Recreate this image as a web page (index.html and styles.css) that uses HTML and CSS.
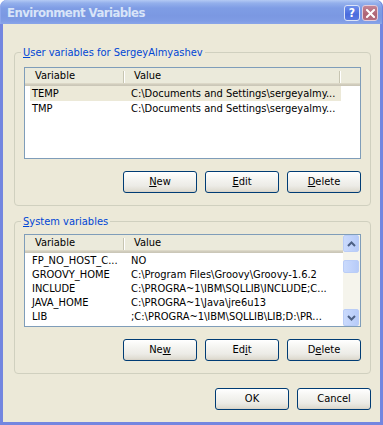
FILE: index.html
```
<!DOCTYPE html>
<html>
<head>
<meta charset="utf-8">
<link rel="stylesheet" href="styles.css">
</head>
<body>
<div class="window">
  <div class="titlebar">
    <span class="title">Environment Variables</span>
    <div class="tbtns">
      <span class="tb help">?</span>
      <span class="tb close"><svg width="9" height="9" viewBox="0 0 9 9"><path d="M1 1 L8 8 M8 1 L1 8" stroke="#fff" stroke-width="2" stroke-linecap="square"/></svg></span>
    </div>
  </div>
  <div class="client">
    <fieldset class="group g1">
      <legend><u>U</u>ser variables for SergeyAlmyashev</legend>
      <div class="list l1">
        <div class="lmain">
          <div class="header">
            <div class="hcell c1">Variable</div>
            <div class="hcell c2 sep">Value</div>
            <div class="hfill"></div>
          </div>
          <div class="rows">
            <div class="row sel"><span class="v1">TEMP</span><span class="v2">C:\Documents and Settings\sergeyalmy...</span></div>
            <div class="row"><span class="v1">TMP</span><span class="v2">C:\Documents and Settings\sergeyalmy...</span></div>
          </div>
        </div>
      </div>
      <div class="btnrow">
        <button class="btn"><u>N</u>ew</button>
        <button class="btn"><u>E</u>dit</button>
        <button class="btn"><u>D</u>elete</button>
      </div>
    </fieldset>
    <fieldset class="group g2">
      <legend><u>S</u>ystem variables</legend>
      <div class="list l2">
        <div class="lmain">
          <div class="header">
            <div class="hcell c1">Variable</div>
            <div class="hcell c2">Value</div>
            <div class="hfill"></div>
          </div>
          <div class="rows">
            <div class="row"><span class="v1">FP_NO_HOST_C...</span><span class="v2">NO</span></div>
            <div class="row"><span class="v1">GROOVY_HOME</span><span class="v2">C:\Program Files\Groovy\Groovy-1.6.2</span></div>
            <div class="row"><span class="v1">INCLUDE</span><span class="v2">C:\PROGRA~1\IBM\SQLLIB\INCLUDE;C...</span></div>
            <div class="row"><span class="v1">JAVA_HOME</span><span class="v2">C:\PROGRA~1\Java\jre6u13</span></div>
            <div class="row"><span class="v1">LIB</span><span class="v2">;C:\PROGRA~1\IBM\SQLLIB\LIB;D:\PR...</span></div>
          </div>
        </div>
        <div class="vscroll">
          <div class="sbtn"><svg width="9" height="6" viewBox="0 0 9 6"><path d="M1 5 L4.5 1.5 L8 5" fill="none" stroke="#4D6185" stroke-width="2"/></svg></div>
          <div class="track"><div class="thumb"></div></div>
          <div class="sbtn"><svg width="9" height="6" viewBox="0 0 9 6"><path d="M1 1 L4.5 4.5 L8 1" fill="none" stroke="#4D6185" stroke-width="2"/></svg></div>
        </div>
      </div>
      <div class="btnrow">
        <button class="btn">Ne<u>w</u></button>
        <button class="btn">Ed<u>i</u>t</button>
        <button class="btn">D<u>e</u>lete</button>
      </div>
    </fieldset>
    <div class="dlgbtns">
      <button class="btn">OK</button>
      <button class="btn">Cancel</button>
    </div>
  </div>
</div>
</body>
</html>
```
FILE: styles.css
```
* { box-sizing: border-box; }
html, body { margin: 0; padding: 0; background: #fff; }
body {
  font-family: "DejaVu Sans Condensed", "DejaVu Sans", sans-serif;
  font-stretch: condensed;
  font-size: 11px;
  color: #000;
}
.window { width: 383px; height: 425px; display: flex; flex-direction: column; }
.titlebar {
  height: 24px;
  border-radius: 7px 7px 0 0;
  background: linear-gradient(to bottom, #B4CAF4 0px, #94B0EC 3px, #7F9DE5 8px, #7B98E2 16px, #7F9CE5 21px, #8AA5E9 24px);
  display: flex;
  align-items: flex-start;
  padding: 0 5px 0 7px;
  box-shadow: inset 1px 0 0 #8CA6EC, inset -1px 0 0 #6E86DC;
}
.title {
  font-family: "DejaVu Sans Condensed", "DejaVu Sans", sans-serif;
  font-weight: bold;
  font-size: 13px;
  color: #D8E4F8;
  line-height: 13px;
  margin-top: 6px;
  flex: 1;
  letter-spacing: -0.55px;
}
.tbtns { display: flex; gap: 2px; margin-top: 5px; }
.tb {
  width: 16px; height: 16px;
  border: 1px solid #DCE4F8;
  border-radius: 3px;
  display: flex; align-items: center; justify-content: center;
  color: #fff; font-weight: bold; font-size: 12px;
  font-family: "DejaVu Sans", sans-serif;
}
.help { background: linear-gradient(to bottom, #6D8FEC, #4A6BDD 60%, #5A79E2); }
.close { background: linear-gradient(to bottom, #C48596, #AE6575 60%, #B46E80); border-color: #E4CCDA; }
.client {
  flex: 1;
  background: #ECE9D8;
  border: 3px solid #7386E0;
  border-top: none;
  padding: 22px 9px 0 11px;
  display: flex;
  flex-direction: column;
}
.group {
  margin: 0;
  border: 1px solid #D0D0BF;
  border-radius: 4px;
  padding: 8px 9px 12px 9px;
  min-width: 0;
}
.group legend {
  color: #0046D5;
  padding: 0 2px;
  margin-left: -3px;
  line-height: 13px;
}
.group u { text-decoration: underline; }
.g1 { padding-bottom: 12px; }
.g2 { margin-top: 9px; padding-top: 6px; }
.list {
  border: 1px solid #7F9DB9;
  background: #fff;
  display: flex;
}
.l1 { height: 92px; }
.l2 { height: 93px; }
.lmain { flex: 1; display: flex; flex-direction: column; min-width: 0; }
.header {
  height: 18px;
  display: flex;
  background: linear-gradient(to bottom, #EBEADB 0, #EBEADB 15px, #E2DECD 15px, #D6D2C2 16px, #CBC7B8 17px, #CBC7B8 18px);
}
.hcell {
  line-height: 16px;
  white-space: nowrap;
  overflow: hidden;
}
.header .c1 {
  width: 100px;
  padding-left: 10px;
  background: linear-gradient(#C7C5B2, #C7C5B2) no-repeat 98px 3px / 1px 12px,
              linear-gradient(#fff, #fff) no-repeat 99px 3px / 1px 12px;
}
.header .c2 { width: 216px; padding-left: 9px; }
.header .sep {
  background: linear-gradient(#C7C5B2, #C7C5B2) no-repeat 214px 3px / 1px 12px,
              linear-gradient(#fff, #fff) no-repeat 215px 3px / 1px 12px;
}
.hfill { flex: 1; }
.rows { padding-top: 0; }
.row {
  height: 15px;
  line-height: 15px;
  margin-left: 5px;
  width: 311px;
  display: flex;
  white-space: nowrap;
}
.l2 .row { height: 14px; line-height: 14px; }
.l2 .rows { padding-top: 1px; }
.row.sel { background: #ECE9D8; }
.v1 { width: 99px; padding-left: 2px; overflow: hidden; }
.v2 { padding-left: 2px; }
.vscroll {
  width: 17px;
  display: flex;
  flex-direction: column;
  background: #F5F4EC;
}
.sbtn, .thumb {
  height: 17px;
  border: 1px solid #BACDF7;
  border-radius: 2px;
  background: linear-gradient(to right, #CADAFC, #C1D3FB 50%, #B7CBF8);
  display: flex; align-items: center; justify-content: center;
}
.sbtn { margin: 0 1px 0 0; }
.track { flex: 1; padding-top: 8px; }
.thumb { height: 13px; margin-right: 1px; }
.btnrow {
  display: flex;
  justify-content: flex-end;
  gap: 8px;
  margin-top: 12px;
}
.btn {
  width: 74px;
  height: 22px;
  border: 1px solid #003C74;
  border-radius: 3px;
  background: linear-gradient(to bottom, #FFFFFF 0%, #F6F6F3 30%, #ECEBE6 70%, #E0DDD3 92%, #D6D0C5 100%);
  font: inherit;
  color: #000;
  padding: 0;
  line-height: 18px;
}
.dlgbtns {
  display: flex;
  justify-content: flex-end;
  gap: 8px;
  margin-top: 14px;
}
```
